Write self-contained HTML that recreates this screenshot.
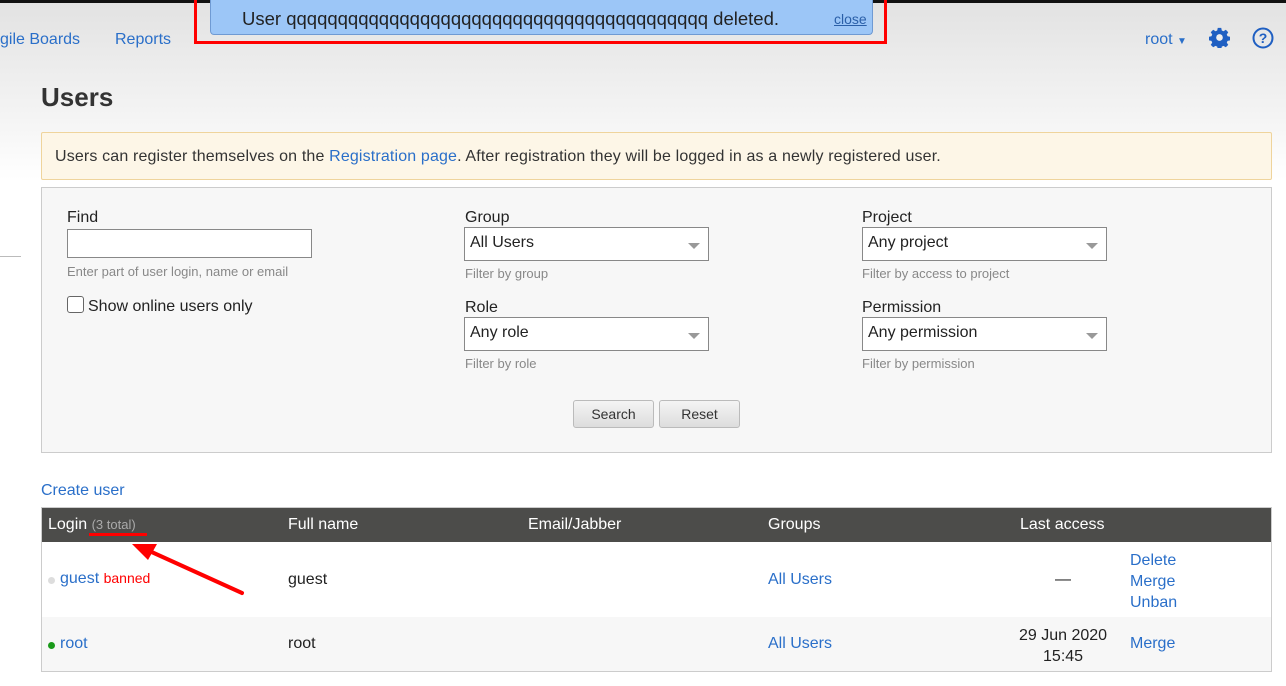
<!DOCTYPE html>
<html><head><style>
*{box-sizing:border-box;margin:0;padding:0}
body{width:1286px;height:686px;overflow:hidden;font-family:"Liberation Sans",Arial,sans-serif;font-size:16px;color:#222;background:linear-gradient(#e2e2e2 0,#f3f3f3 110px,#fff 180px);position:relative}
.a{position:absolute;white-space:nowrap}
.l{color:#2a6fc9}
.g{color:#888;font-size:14px}
.sel{position:absolute;width:245px;height:34px;background:#fff;border:1px solid #888;padding:6px 5px;font-size:16px}
.sel:after{content:"";position:absolute;right:8px;top:15px;border:6px solid transparent;border-top:6px solid #999;border-bottom:0}
.btn{position:absolute;height:28px;width:81px;border:1px solid #bbb;border-radius:3px;background:linear-gradient(#f4f4f4,#ddd);font-size:14px;text-align:center;line-height:26px;color:#333}
</style></head><body>
<div class="a" style="left:0;top:0;width:1286px;height:3px;background:#111"></div>
<div class="a l" style="left:0;top:31px">gile Boards</div>
<div class="a l" style="left:115px;top:31px">Reports</div>
<div class="a" style="left:210px;top:0;width:663px;height:35px;background:#9cc6f7;border:1px solid #6f9ad3;border-top:0;border-radius:0 0 4px 4px"></div>
<div class="a" style="left:242px;top:8px;font-size:18.5px;color:#222">User qqqqqqqqqqqqqqqqqqqqqqqqqqqqqqqqqqqqqqqqq deleted.</div>
<div class="a" style="left:834px;top:11px;font-size:14px;color:#2a5fa8;text-decoration:underline">close</div>
<div class="a" style="left:194px;top:-4px;width:693px;height:48px;border:3px solid #f00"></div>
<div class="a l" style="left:1145px;top:31px">root <span style="font-size:10px">▼</span></div>
<svg class="a" style="left:1209px;top:27px" width="21" height="21" viewBox="0 0 24 24"><path fill="#1f5fc2" d="M10 1h4l.6 3 2 .9 2.6-1.7 2.8 2.8-1.7 2.6.9 2 3 .6v4l-3 .6-.9 2 1.7 2.6-2.8 2.8-2.6-1.7-2 .9-.6 3h-4l-.6-3-2-.9-2.6 1.7-2.8-2.8 1.7-2.6-.9-2-3-.6v-4l3-.6.9-2-1.7-2.6 2.8-2.8 2.6 1.7 2-.9z"/><circle cx="12" cy="12" r="3.8" fill="#eee"/></svg>
<svg class="a" style="left:1252px;top:27px" width="22" height="22" viewBox="0 0 22 22"><circle cx="11" cy="11" r="9.5" fill="none" stroke="#1f5fc2" stroke-width="2"/><text x="11" y="16" text-anchor="middle" font-size="14" font-weight="bold" fill="#1f5fc2" font-family="Liberation Sans">?</text></svg>
<div class="a" style="left:41px;top:82px;font-size:26px;font-weight:bold;color:#333">Users</div>
<div class="a" style="left:0;top:256px;width:21px;height:1px;background:#bbb"></div>
<div class="a" style="left:41px;top:132px;width:1231px;height:48px;background:#fdf6e7;border:1px solid #efd49c;border-radius:2px"></div>
<div class="a" style="left:55px;top:148px;color:#333;letter-spacing:0.15px">Users can register themselves on the <span class="l">Registration page</span>. After registration they will be logged in as a newly registered user.</div>
<div class="a" style="left:41px;top:187px;width:1231px;height:266px;background:#f7f7f7;border:1px solid #ccc"></div>
<div class="a" style="left:67px;top:209px">Find</div>
<div class="a" style="left:67px;top:229px;width:245px;height:29px;background:#fff;border:1px solid #888"></div>
<div class="a g" style="left:67px;top:264px;font-size:13px">Enter part of user login, name or email</div>
<div class="a" style="left:67px;top:296px;width:17px;height:17px;border:1px solid #666;border-radius:3px;background:#fff"></div>
<div class="a" style="left:88px;top:298px">Show online users only</div>
<div class="a" style="left:465px;top:209px">Group</div>
<div class="sel" style="left:464px;top:227px">All Users</div>
<div class="a g" style="left:465px;top:266px;font-size:13px">Filter by group</div>
<div class="a" style="left:465px;top:299px">Role</div>
<div class="sel" style="left:464px;top:317px">Any role</div>
<div class="a g" style="left:465px;top:356px;font-size:13px">Filter by role</div>
<div class="a" style="left:862px;top:209px">Project</div>
<div class="sel" style="left:862px;top:227px">Any project</div>
<div class="a g" style="left:862px;top:266px;font-size:13px">Filter by access to project</div>
<div class="a" style="left:862px;top:299px">Permission</div>
<div class="sel" style="left:862px;top:317px">Any permission</div>
<div class="a g" style="left:862px;top:356px;font-size:13px">Filter by permission</div>
<div class="btn" style="left:573px;top:400px">Search</div>
<div class="btn" style="left:659px;top:400px">Reset</div>
<div class="a l" style="left:41px;top:482px">Create user</div>
<div class="a" style="left:41px;top:507px;width:1231px;height:165px;border:1px solid #ccc;background:#fff"></div>
<div class="a" style="left:42px;top:508px;width:1229px;height:34px;background:#4c4c4a"></div>
<div class="a" style="left:42px;top:617px;width:1229px;height:54px;background:#f7f7f7"></div>
<div class="a" style="left:48px;top:516px;color:#fff">Login <span style="color:#aaa;font-size:13px">(3 total)</span></div>
<div class="a" style="left:288px;top:516px;color:#fff">Full name</div>
<div class="a" style="left:528px;top:516px;color:#fff">Email/Jabber</div>
<div class="a" style="left:768px;top:516px;color:#fff">Groups</div>
<div class="a" style="left:1020px;top:516px;color:#fff">Last access</div>
<div class="a" style="left:89px;top:533px;width:58px;height:3px;background:#f00"></div>
<svg class="a" style="left:120px;top:540px" width="130" height="60"><line x1="122" y1="53" x2="25" y2="9" stroke="#f00" stroke-width="4" stroke-linecap="round"/><polygon points="12,4 37,4 28,20" fill="#f00"/></svg>
<div class="a" style="left:48px;top:577px;width:7px;height:7px;border-radius:50%;background:#ddd"></div>
<div class="a l" style="left:60px;top:570px">guest <span style="color:#f00;font-size:14px">banned</span></div>
<div class="a" style="left:288px;top:571px">guest</div>
<div class="a l" style="left:768px;top:571px">All Users</div>
<div class="a" style="left:1055px;top:571px">—</div>
<div class="a l" style="left:1130px;top:550px;line-height:21px">Delete<br>Merge<br>Unban</div>
<div class="a" style="left:48px;top:642px;width:7px;height:7px;border-radius:50%;background:#1a9a1a"></div>
<div class="a l" style="left:60px;top:635px">root</div>
<div class="a" style="left:288px;top:635px">root</div>
<div class="a l" style="left:768px;top:635px">All Users</div>
<div class="a" style="left:1019px;top:625px;text-align:center;line-height:21px">29 Jun 2020<br>15:45</div>
<div class="a l" style="left:1130px;top:635px">Merge</div>
</body></html>
